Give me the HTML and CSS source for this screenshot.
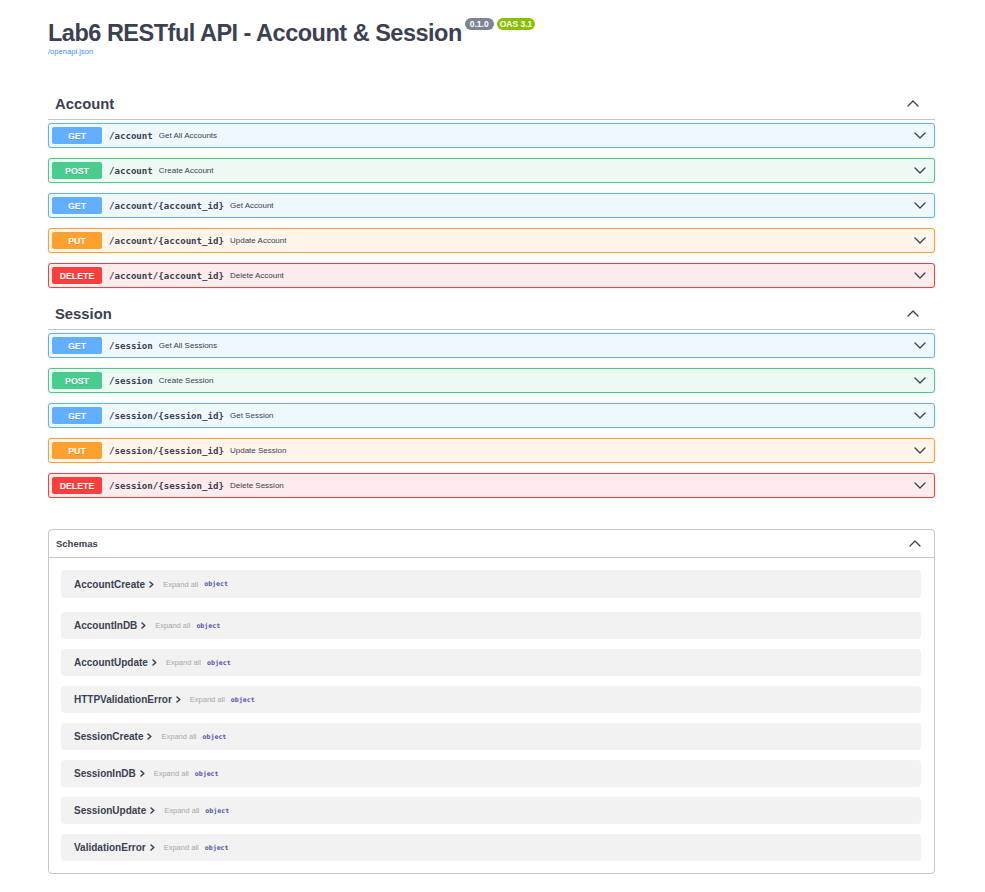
FILE: index.html
```html
<!DOCTYPE html>
<html>
<head>
<meta charset="utf-8">
<title>Lab6 RESTful API - Account &amp; Session</title>
<link rel="stylesheet" href="styles.css">
</head>
<body>
<div class="wrapper">
  <div class="info">
    <div class="title-row">
      <h2 class="title">Lab6 RESTful API - Account &amp; Session</h2>
      <span class="badge version">0.1.0</span>
      <span class="badge oas">OAS 3.1</span>
    </div>
    <a class="url" href="#">/openapi.json</a>
  </div>

  <section class="tag">
    <div class="tag-head">
      <h3>Account</h3>
      <svg class="chev" width="12" height="7" viewBox="0 0 12 7"><polyline points="1,6 6,1 11,6"/></svg>
    </div>
    <div class="op get"><span class="method">GET</span><span class="path">/account</span><span class="desc">Get All Accounts</span><svg class="chev" width="12" height="7" viewBox="0 0 12 7"><polyline points="1,1 6,6 11,1"/></svg></div>
    <div class="op post"><span class="method">POST</span><span class="path">/account</span><span class="desc">Create Account</span><svg class="chev" width="12" height="7" viewBox="0 0 12 7"><polyline points="1,1 6,6 11,1"/></svg></div>
    <div class="op get"><span class="method">GET</span><span class="path">/account/{account_id}</span><span class="desc">Get Account</span><svg class="chev" width="12" height="7" viewBox="0 0 12 7"><polyline points="1,1 6,6 11,1"/></svg></div>
    <div class="op put"><span class="method">PUT</span><span class="path">/account/{account_id}</span><span class="desc">Update Account</span><svg class="chev" width="12" height="7" viewBox="0 0 12 7"><polyline points="1,1 6,6 11,1"/></svg></div>
    <div class="op delete"><span class="method">DELETE</span><span class="path">/account/{account_id}</span><span class="desc">Delete Account</span><svg class="chev" width="12" height="7" viewBox="0 0 12 7"><polyline points="1,1 6,6 11,1"/></svg></div>
  </section>

  <section class="tag">
    <div class="tag-head">
      <h3>Session</h3>
      <svg class="chev" width="12" height="7" viewBox="0 0 12 7"><polyline points="1,6 6,1 11,6"/></svg>
    </div>
    <div class="op get"><span class="method">GET</span><span class="path">/session</span><span class="desc">Get All Sessions</span><svg class="chev" width="12" height="7" viewBox="0 0 12 7"><polyline points="1,1 6,6 11,1"/></svg></div>
    <div class="op post"><span class="method">POST</span><span class="path">/session</span><span class="desc">Create Session</span><svg class="chev" width="12" height="7" viewBox="0 0 12 7"><polyline points="1,1 6,6 11,1"/></svg></div>
    <div class="op get"><span class="method">GET</span><span class="path">/session/{session_id}</span><span class="desc">Get Session</span><svg class="chev" width="12" height="7" viewBox="0 0 12 7"><polyline points="1,1 6,6 11,1"/></svg></div>
    <div class="op put"><span class="method">PUT</span><span class="path">/session/{session_id}</span><span class="desc">Update Session</span><svg class="chev" width="12" height="7" viewBox="0 0 12 7"><polyline points="1,1 6,6 11,1"/></svg></div>
    <div class="op delete"><span class="method">DELETE</span><span class="path">/session/{session_id}</span><span class="desc">Delete Session</span><svg class="chev" width="12" height="7" viewBox="0 0 12 7"><polyline points="1,1 6,6 11,1"/></svg></div>
  </section>

  <section class="models">
    <div class="models-head">
      <h4>Schemas</h4>
      <svg class="chev" width="12" height="7" viewBox="0 0 12 7"><polyline points="1,6 6,1 11,6"/></svg>
    </div>
    <div class="model-list">
      <div class="model"><span class="model-name">AccountCreate</span><svg class="toggle" width="5" height="7" viewBox="0 0 5 7"><polyline points="1,1 3.8,3.5 1,6"/></svg><span class="expand">Expand all</span><span class="ptype">object</span></div>
      <div class="model"><span class="model-name">AccountInDB</span><svg class="toggle" width="5" height="7" viewBox="0 0 5 7"><polyline points="1,1 3.8,3.5 1,6"/></svg><span class="expand">Expand all</span><span class="ptype">object</span></div>
      <div class="model"><span class="model-name">AccountUpdate</span><svg class="toggle" width="5" height="7" viewBox="0 0 5 7"><polyline points="1,1 3.8,3.5 1,6"/></svg><span class="expand">Expand all</span><span class="ptype">object</span></div>
      <div class="model"><span class="model-name">HTTPValidationError</span><svg class="toggle" width="5" height="7" viewBox="0 0 5 7"><polyline points="1,1 3.8,3.5 1,6"/></svg><span class="expand">Expand all</span><span class="ptype">object</span></div>
      <div class="model"><span class="model-name">SessionCreate</span><svg class="toggle" width="5" height="7" viewBox="0 0 5 7"><polyline points="1,1 3.8,3.5 1,6"/></svg><span class="expand">Expand all</span><span class="ptype">object</span></div>
      <div class="model"><span class="model-name">SessionInDB</span><svg class="toggle" width="5" height="7" viewBox="0 0 5 7"><polyline points="1,1 3.8,3.5 1,6"/></svg><span class="expand">Expand all</span><span class="ptype">object</span></div>
      <div class="model"><span class="model-name">SessionUpdate</span><svg class="toggle" width="5" height="7" viewBox="0 0 5 7"><polyline points="1,1 3.8,3.5 1,6"/></svg><span class="expand">Expand all</span><span class="ptype">object</span></div>
      <div class="model"><span class="model-name">ValidationError</span><svg class="toggle" width="5" height="7" viewBox="0 0 5 7"><polyline points="1,1 3.8,3.5 1,6"/></svg><span class="expand">Expand all</span><span class="ptype">object</span></div>
    </div>
  </section>
</div>
</body>
</html>
```

FILE: styles.css
```css
* { box-sizing: border-box; }

body {
  margin: 0;
  background: #fff;
  color: #3b4151;
  font-family: "Liberation Sans", Arial, sans-serif;
}

.wrapper {
  padding: 0 50px 0 48px;
}

/* ---------- info ---------- */
.info {
  padding-top: 19px;
  height: 88px;
}

.title-row {
  display: flex;
  align-items: flex-start;
}

.title {
  margin: 0;
  font-size: 23.5px;
  line-height: 28px;
  letter-spacing: -0.5px;
  font-weight: 700;
  color: #3b4151;
}

.badge {
  margin-top: -1px;
  height: 12px;
  line-height: 12px;
  border-radius: 6px;
  font-size: 8.5px;
  font-weight: 700;
  color: #fff;
}

.badge.version {
  margin-left: 3px;
  padding: 0 5px;
  background: #7d8492;
}

.badge.oas {
  margin-left: 3px;
  padding: 0 3px;
  background: #89bf04;
}

.url {
  display: block;
  font-size: 7.6px;
  line-height: 10px;
  color: #4990e2;
  text-decoration: none;
}

/* ---------- chevrons ---------- */
.chev polyline,
.toggle polyline {
  fill: none;
  stroke: #3b4151;
  stroke-width: 1.3;
  stroke-linecap: round;
  stroke-linejoin: round;
}

.toggle polyline {
  stroke-width: 1.5;
}

/* ---------- tags ---------- */
.tag-head {
  display: flex;
  align-items: center;
  justify-content: space-between;
  height: 32px;
  padding: 0 16px 0 7px;
  border-bottom: 1px solid rgba(59, 65, 81, 0.3);
  margin-bottom: 3px;
}

.tag-head h3 {
  margin: 0;
  font-size: 14.8px;
  font-weight: 700;
}

/* ---------- operations ---------- */
.op {
  display: flex;
  align-items: center;
  height: 25px;
  padding: 0 3px;
  margin-bottom: 10px;
  border: 1px solid;
  border-radius: 3px;
  box-shadow: 0 0 2px rgba(0, 0, 0, 0.12);
}

.op .chev {
  margin-right: 5px;
}

.method {
  width: 50px;
  height: 17px;
  border-radius: 2px;
  display: flex;
  align-items: center;
  justify-content: center;
  color: #fff;
  font-size: 8.8px;
  font-weight: 700;
  text-shadow: 0 1px 0 rgba(0, 0, 0, 0.1);
}

.path {
  margin-left: 7px;
  font-family: "DejaVu Sans Mono", monospace;
  font-size: 9.1px;
  font-weight: 700;
  color: #3b4151;
}

.desc {
  flex: 1;
  margin-left: 6px;
  font-size: 8px;
  color: #3b4151;
}

.op.get { background: #eff7ff; border-color: #61affe; }
.op.get .method { background: #61affe; }
.op.post { background: #edfaf4; border-color: #49cc90; }
.op.post .method { background: #49cc90; }
.op.put { background: #fff5ea; border-color: #fca130; }
.op.put .method { background: #fca130; }
.op.delete { background: #feebeb; border-color: #f93e3e; }
.op.delete .method { background: #f93e3e; }

/* ---------- schemas ---------- */
.models {
  margin-top: 31px;
  margin-bottom: 16px;
  border: 1px solid rgba(59, 65, 81, 0.3);
  border-radius: 4px;
}

.models-head {
  display: flex;
  align-items: center;
  justify-content: space-between;
  height: 28px;
  padding: 0 13px 0 7px;
  border-bottom: 1px solid rgba(59, 65, 81, 0.3);
}

.models-head h4 {
  margin: 0;
  font-size: 9.5px;
  font-weight: 700;
}

.model-list {
  padding: 12px 13px 12px 12px;
}

.model {
  display: flex;
  align-items: center;
  height: 27px;
  padding-left: 13px;
  margin-bottom: 10px;
  border-radius: 4px;
  background: rgba(0, 0, 0, 0.05);
}

.model:first-child {
  height: 28px;
  margin-bottom: 14px;
}

.model:last-child {
  margin-bottom: 0;
}

.model-name {
  font-size: 10px;
  font-weight: 700;
  color: #3b4151;
}

.toggle {
  margin-left: 4px;
}

.expand {
  margin-left: 9px;
  font-size: 7.5px;
  color: #a8a8a8;
}

.ptype {
  margin-left: 6px;
  font-family: "DejaVu Sans Mono", monospace;
  font-size: 6.6px;
  font-weight: 700;
  color: #55a;
}
```
